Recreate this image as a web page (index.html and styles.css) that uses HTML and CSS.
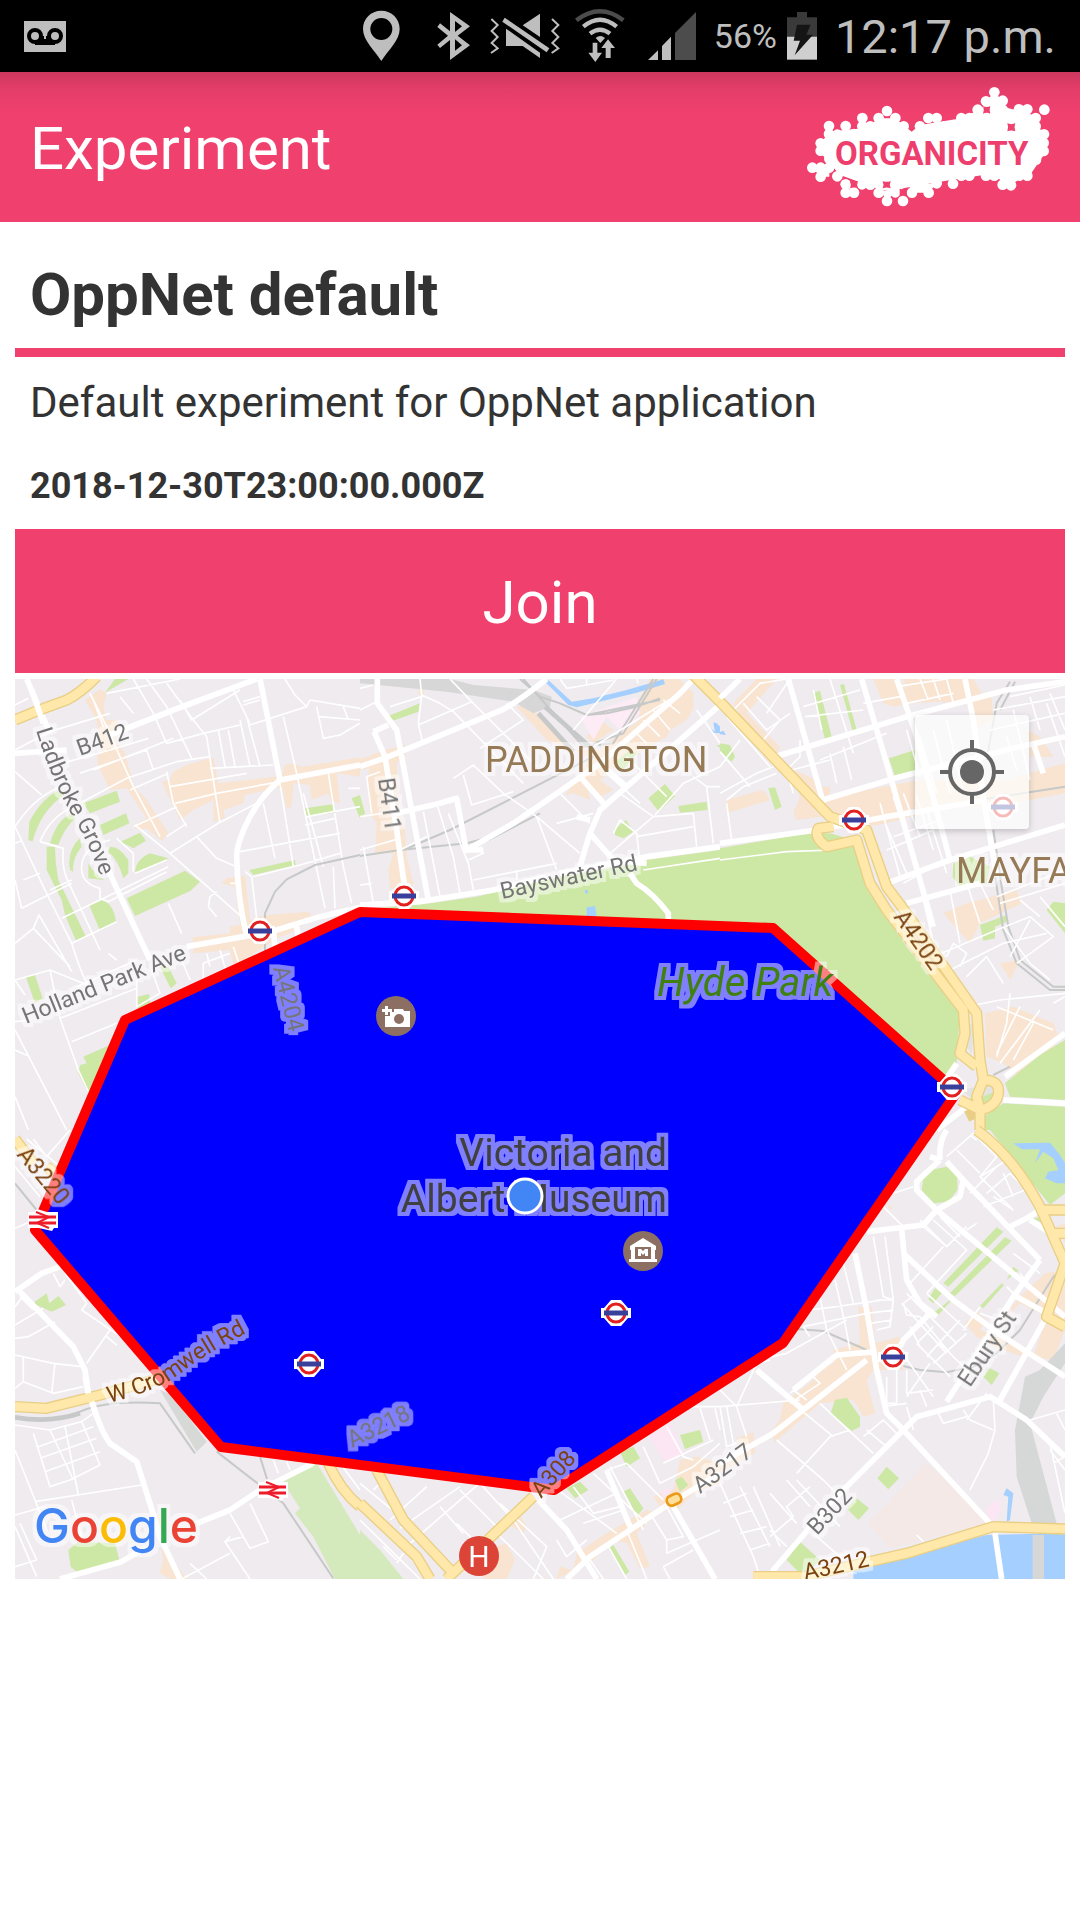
FILE: index.html
```html
<!DOCTYPE html>
<html lang="en">
<head>
<meta charset="utf-8">
<meta name="viewport" content="width=device-width, initial-scale=1">
<title>Experiment</title>
<link rel="stylesheet" href="styles.css">
</head>
<body>
<div class="status">
  <svg class="voicemail" viewBox="0 0 42 31" width="42" height="31" aria-label="Voicemail"><path fill="#bebebe" d="M0 0h42v31H0z"/><g fill="none" stroke="#000" stroke-width="4"><circle cx="11" cy="15" r="6"/><circle cx="31" cy="15" r="6"/><path d="M11 22H31M18 15V20H24V15"/></g></svg>
  <div class="status-right">
    <svg class="sysicons" viewBox="0 0 1050 216" width="350" height="72" aria-hidden="true">
      <g fill="#bebebe">
        <path fill-rule="evenodd" d="M106 32c-31 0-55 24-55 55 0 35 36 65 55 96 19-31 55-61 55-96 0-31-24-55-55-55zm0 22a33 33 0 1 1 0 66 33 33 0 0 1 0-66z"/>
        <path fill-rule="evenodd" d="M312 36l60 43-37 28 37 29-60 44v-60l-30 24-8-10 32-27-32-26 8-11 30 24zM327 63v33l21-17zM327 118v34l21-16z"/>
        <path d="M480 86l102 72v16l-52-36h-50zM530 76l52-35v70zM476 53l134 92-8 12-133-92z"/>
        <path d="M740 128h14v30h14l-20 28-21-28h13zM779 174v-30h-13l20-26 21 26h-13v30zM763 129l-14-15q14-12 28 0zM906 180l30-29v29zM948 180v-42l27-28v70z"/>
      </g>
      <g fill="none" stroke="#bebebe" stroke-width="6"><path d="M436 57l19 18-18 18 18 18-18 18 18 16-20 14M618 57l19 18-18 18 18 18-18 18 18 16-20 14"/></g>
      <g fill="none" stroke="#bebebe" stroke-width="13"><path d="M712 80q50-42 100 0M732 101q30-24 60 0"/><path stroke="#4c4c4c" d="M691 61q71-54 141 0"/></g>
      <path fill="#4c4c4c" d="M987 180V99l63-63v144z"/>
    </svg>
    <span class="percent">56%</span>
    <svg viewBox="0 0 90 144" width="30" height="48" aria-label="Charging"><path fill="#3a3a3a" d="M0 16h30V0h30v16h30v58H0z"/><path fill="#cfcfcf" d="M0 74h90v69H0z"/><path fill="#151515" d="M30 38h41L58 68h20L23 130l16-44H20z"/></svg>
    <span class="clock">12:17 p.m.</span>
  </div>
</div>
<header class="appbar">
  <h1>Experiment</h1>
  <svg class="logo" viewBox="806 86 244 122" width="244" height="122" role="img" aria-label="Organicity">
    <g transform="translate(780 60) scale(.33333)" fill="#fff">
      <path d="M140 225L170 212 250 205 300 175 345 175 395 215 420 195 545 175 595 150 650 110 670 140 760 165 785 215 795 280 750 345 690 365 610 345 480 365 370 385 350 400 290 385 180 345 140 300 115 270 130 240Z"/>
      <path d="M96 323H148V350H122Z M195 375L222 398 235 375Z M300 390L321 423 345 395Z M385 375L400 398 446 398 470 370Z M655 350L668 374 693 374 740 345Z M643 97L618 124 640 160 670 150 668 122Z"/>
      <g>
        <circle cx="147" cy="198" r="16"/><circle cx="197" cy="198" r="16"/><circle cx="147" cy="222" r="16"/><circle cx="172" cy="224" r="16"/><circle cx="222" cy="222" r="16"/><circle cx="122" cy="250" r="16"/><circle cx="122" cy="272" r="16"/><circle cx="148" cy="296" r="16"/><circle cx="97" cy="323" r="16"/><circle cx="122" cy="323" r="16"/><circle cx="122" cy="350" r="16"/><circle cx="147" cy="323" r="16"/><circle cx="172" cy="349" r="16"/><circle cx="197" cy="373" r="16"/><circle cx="197" cy="398" r="16"/><circle cx="222" cy="398" r="16"/><circle cx="246" cy="373" r="16"/><circle cx="271" cy="374" r="16"/><circle cx="296" cy="398" r="16"/><circle cx="321" cy="423" r="16"/><circle cx="369" cy="423" r="16"/><circle cx="346" cy="397" r="16"/><circle cx="396" cy="398" r="16"/><circle cx="421" cy="373" r="16"/><circle cx="446" cy="398" r="16"/><circle cx="470" cy="370" r="16"/><circle cx="519" cy="371" r="16"/><circle cx="544" cy="347" r="16"/><circle cx="568" cy="347" r="16"/><circle cx="618" cy="347" r="16"/><circle cx="643" cy="347" r="16"/><circle cx="668" cy="374" r="16"/><circle cx="693" cy="376" r="16"/><circle cx="718" cy="347" r="16"/><circle cx="742" cy="347" r="16"/><circle cx="742" cy="323" r="16"/><circle cx="768" cy="299" r="16"/><circle cx="791" cy="273" r="16"/><circle cx="791" cy="249" r="16"/><circle cx="792" cy="223" r="16"/><circle cx="767" cy="199" r="16"/><circle cx="767" cy="174" r="16"/><circle cx="793" cy="149" r="16"/><circle cx="742" cy="148" r="16"/><circle cx="717" cy="148" r="16"/><circle cx="693" cy="174" r="16"/><circle cx="668" cy="149" r="16"/><circle cx="668" cy="122" r="16"/><circle cx="643" cy="97" r="16"/><circle cx="618" cy="124" r="16"/><circle cx="593" cy="149" r="16"/><circle cx="568" cy="174" r="16"/><circle cx="544" cy="174" r="16"/><circle cx="519" cy="199" r="16"/><circle cx="494" cy="199" r="16"/><circle cx="470" cy="174" r="16"/><circle cx="445" cy="174" r="16"/><circle cx="420" cy="199" r="16"/><circle cx="371" cy="199" r="16"/><circle cx="346" cy="174" r="16"/><circle cx="321" cy="153" r="16"/><circle cx="296" cy="174" r="16"/><circle cx="271" cy="199" r="16"/><circle cx="247" cy="199" r="16"/><circle cx="247" cy="174" r="16"/>
      </g>
      <path fill="#f0406e" d="M682 190q12 5 24 0-5 11 0 24-12-5-24 0 5-12 0-24zM609 139q11 4 22 0-4 10 0 22-11-5-22 0 5-11 0-22zM210 363q12 5 24 0-5 11 0 22-12-5-24 0 5-11 0-22zM308 363q12 5 24 0-5 11 0 22-12-5-24 0 5-11 0-22zM359 386q12 5 22 0-3 10 0 20-11-5-22 0z"/>
    </g>
    <text class="logo-text" x="835" y="165">ORGANICITY</text>
  </svg>
</header>
<main>
  <h2>OppNet default</h2>
  <p class="desc">Default experiment for OppNet application</p>
  <p class="date">2018-12-30T23:00:00.000Z</p>
  <button class="join" type="button">Join</button>
  <div class="map">
    <svg class="canvas" viewBox="15 679 1050 900" role="img" aria-label="Map of the experiment area">
      <defs>
        <filter id="halo" filterUnits="userSpaceOnUse" x="15" y="679" width="1050" height="900" color-interpolation-filters="sRGB"><feMorphology in="SourceAlpha" operator="dilate" radius="4" result="wide"/><feFlood flood-color="#fff" flood-opacity=".5"/><feComposite in2="wide" operator="in"/><feMerge><feMergeNode/><feMergeNode in="SourceGraphic"/></feMerge></filter>
        <symbol id="tube" viewBox="-15 -15 30 30"><path fill="#fff" d="M-15-5H-12L-5-13H5L12-5H15V5H12L5 13H-5L-12 5H-15Z"/><circle r="9" fill="#fff" stroke="#e1201f" stroke-width="3"/><path fill="#38409c" d="M-12-2.500h24v5h-24z"/></symbol>
        <symbol id="train" viewBox="-15 -12 30 24"><path fill="#fff" d="M-15-8H-9L-6-11 4-8H15V8H11L9 11-4 8H-15Z"/><path fill="none" stroke="#ee1c2b" stroke-width="3" d="M-14-3H13M-14 3H13"/><path fill="none" stroke="#ee1c2b" stroke-width="2" d="M-7-8L6-3-6 3 6 8"/></symbol>
        <path id="ladbroke" d="M36 730Q52 782 73 817T108 900"/>
        <path id="cromwell" d="M109 1403Q158 1391 182 1372T262 1325"/>
      </defs>
      <path fill="#efebef" d="M15 679h1050v900H15z"/>

      <!-- Notting Hill -->
      <g transform="translate(0 670) scale(.33333)">
        <path class="shop" d="M255 90L300 58 320 70 310 110 320 150 350 150 358 190 345 210 375 250 400 345 440 390 505 490 485 512 440 475 420 480 395 470 440 445 380 355 330 360 292 280 292 255 305 250 290 150ZM485 335L510 330 520 305 560 285 640 262 655 340 845 318 855 285 880 280 905 290 1000 275 1080 262V320L1010 310 1020 400 995 395 985 370 935 390 930 345 880 340 875 410 860 415 845 350 735 375 730 400 670 420 675 445 640 455 640 390 580 420 540 450ZM665 640L680 625 735 618 750 750 800 735 925 725 940 745 870 790 840 800 730 870 700 885 690 840 580 850 578 802 690 790 690 770 720 765 705 650Z"/>
        <path class="park" d="M85 510L88 455Q125 385 175 362L195 372Q120 425 98 514ZM140 600V530H165Q165 580 175 630L258 800 228 812 195 735 185 690ZM150 520Q170 450 215 430L225 445Q190 480 175 525ZM250 400L350 362 360 395 270 430ZM300 465L378 430 388 460 310 495ZM210 600Q200 540 240 505L245 530Q215 565 220 605ZM265 625V580Q280 610 312 630ZM330 530Q360 530 385 570V610L370 625Q355 570 325 545ZM362 515L420 488 438 512 400 535ZM405 610Q405 570 450 550L505 565 480 580ZM380 685L555 602 600 635 572 662 405 738ZM268 706L300 690Q340 695 348 755L300 782ZM78 922L105 915 128 985 105 1000ZM915 415L1002 402 1005 428 920 440ZM748 600L885 570 887 585 760 615ZM1055 385L1080 375V445ZM315 68L345 27H385ZM480 890H505L530 940 512 955ZM413 980L447 972 452 1005 413 1025ZM250 1160L330 1125 268 1275 235 1210 240 1185 260 1180Z"/>
        <path class="minor" d="M45 105L85 85M45 240L150 185 330 130M45 305L125 375M45 470Q110 370 200 345M45 470L130 650 215 820M45 520L65 512M65 715L45 630M65 715L215 640M70 630L120 610M120 515L190 535Q185 590 200 625L300 840M120 515Q150 440 220 410L380 325 530 275 630 260M150 660L215 630M185 745L300 690 505 590M215 820L350 755M215 820Q240 900 262 945M45 820L100 775 117 735 215 905M100 775L210 890M45 930L150 900 180 1045 410 955V930M45 1055L90 1050M180 1045L235 1200 270 1275M215 1115L350 1060M45 1080L200 1380M45 1140L90 1160M45 1280L85 1380M45 930L75 975M150 900L262 945M150 290L330 240 445 205M280 300L520 205M240 310L440 240 460 300M270 70L320 170 400 350 480 500M320 70L540 27M310 170L280 90M360 80L400 130M400 27L460 130 500 220 610 190 720 165M440 27L500 110 575 265M500 40L580 150 620 200 660 460M540 90L575 150 720 60M655 180L675 290M685 180L705 290M720 150L750 290M740 140L780 290M630 295L820 285M730 95L780 80M730 105L780 90M700 60L750 160M750 165L920 110 885 75 855 27M850 140L890 310 975 715M920 110L930 90 1080 115M950 110L970 205 1020 195 1080 160M955 140L1080 150M1030 110L1045 150M500 305L520 400 560 470M510 350L740 310M525 400L650 370 840 335M400 470L530 410M390 360L505 310M500 500L560 460M405 465L510 550 730 745M510 550L655 460 770 400M590 500L650 565 720 595M500 570L405 610M400 605V550L350 505M330 510Q250 530 245 585T300 655M300 655V685L325 695 500 605M720 545L880 515 1020 490M790 400L825 565M735 605L755 620 770 745M760 620L900 585 1020 550M840 340L880 590M910 370L970 590M985 310L1030 590 1055 700M915 465L1005 445M1045 355H1080M920 440L1080 410M1000 590L1005 715M625 710L630 680 650 665M625 710L650 740M690 640H720M505 700L545 790M620 850L630 890M660 840L680 910M700 830L720 890M610 930V880L690 850M545 870L570 930M410 955V1010L480 970 455 900M350 870L325 850M230 950L410 870"/>
        <path class="rail" d="M795 850V730L825 665 860 628 945 585 1080 555M900 765Q960 740 1080 715"/>
        <path class="major" d="M45 250L200 240M330 195L520 120 770 27M780 27L840 330M1080 285L840 330Q780 380 745 450T710 560Q712 680 740 800M80 27L120 120 150 190M320 590L380 720 450 870M560 830L730 800 830 780 960 740 1080 712M890 770L895 800M820 780L825 830"/>
        <path class="edge" d="M45 150L105 125 200 90Q240 70 290 20"/><path class="yellow" d="M45 150L105 125 200 90Q240 70 290 20"/>
        <path class="major" d="M95 60L130 160"/>
      </g>

      <!-- Paddington -->
      <g transform="translate(360 670) scale(.33333)">
        <path class="shop" d="M0 268L75 240 135 225 135 270 110 275 115 420 135 480 140 560 160 640 155 665 90 655 85 600 100 550 45 550 50 460 30 430 20 330 30 295 0 300ZM172 27H187L192 75 178 77ZM470 110L500 100 600 200 640 240 720 240 780 190 840 150 830 100 870 27H960L1000 70 1000 115 980 150 930 180 920 200 850 240 750 300 720 330 760 360 720 380 680 340 690 390 640 370 615 375 650 330 690 260 560 210ZM680 200L720 150 760 180 700 220Z"/>
        <path class="park" d="M80 140L180 100 175 125 90 155ZM0 375L15 430 0 445ZM210 700L350 680 600 620 830 580 860 570 1080 540V755L0 720ZM865 385L915 342 945 378 897 425ZM955 408L1040 395 1043 420 960 428ZM763 478L798 450 820 485 790 505 765 495ZM760 280L810 240 830 250 790 300ZM1070 225H1080V235Z"/>
        <path fill="#fdebf5" d="M660 140L830 80 840 130 790 190 740 140 700 210Z"/>
        <path class="water" d="M555 35L565 30 635 95 700 85 800 60 870 40 910 28 915 42 830 68 650 112 625 105ZM680 712L705 708 710 740H680ZM1050 175L1065 185 1060 158H1068L1080 170V190L1055 188ZM675 660H684V670H675Z"/>
        <path fill="#d7d7d7" d="M0 27H270L340 45 520 60 575 80 570 110 520 130 460 95 260 65 0 40Z"/>
        <path class="rail" d="M0 558L120 540 320 520 395 500M130 540L270 480 700 260M385 510L540 430M480 27L540 80 600 100 680 135 900 90M680 135L740 130 830 110 900 85M490 27L670 230 760 220 880 27M700 220L790 190 890 27"/>
        <path class="rail dense" d="M535 130L640 245M555 110L700 240"/>
        <path class="minor" d="M0 120L50 95M0 55L40 45M180 27L185 75 240 100 280 125 490 340M185 75L175 160 187 215M175 165L335 95M270 27L340 100 370 130 530 290M440 100L490 150 360 235M185 80L90 110M0 440L240 405M20 320L60 305M20 320L35 430M0 540L120 505M10 530L40 700M0 645L35 640M190 425L240 680M230 400L280 560 300 670M240 405L265 395M265 430L325 580 340 660M340 630L590 580M325 570L370 550 360 530M280 325L340 285 430 370 530 440 590 600M310 315L335 405 460 365M530 440L660 550M470 600V630M590 460L700 430M600 370L690 460M780 370L880 440 750 550M760 490L780 450 830 490 840 580M830 500L1000 470M880 440L1000 430 1010 530M885 435L970 340 1080 290M1000 320L1040 350H1080M1040 350L1060 520M740 310L840 400M800 260L920 380M700 230L960 70M820 180L860 220M850 150L900 200M880 120L930 180M910 90L960 130M600 27L620 55 680 45 760 30M680 27V45M830 27L835 40M1010 120L1080 220M850 600L1080 565M640 180L770 27M120 540L200 500M0 700L210 685"/>
        <path class="major" d="M0 290L80 262 430 118Q480 90 560 27M52 27V100L110 180 155 420 205 690M40 185L85 165M42 185L75 260 110 480 135 660M110 430L240 400 290 385 320 550M320 540L460 460 620 350 720 280 960 70 1000 27M320 540L370 540M0 705L180 695 400 660 560 620M600 610L860 560 1080 530M660 590Q680 520 690 490L720 420 1080 105M690 450L650 440M690 490L760 570 860 580M660 320L740 410M740 300L800 350M810 610L830 640Q880 670 925 730V748"/>
        <path class="edge" d="M1000 15L1080 95"/><path class="yellow" d="M1000 15L1080 95"/>
      </g>

      <!-- Mayfair and Marble Arch -->
      <g transform="translate(720 670) scale(.33333)">
        <path class="shop" d="M40 100L110 27H170L80 130 120 170 180 230 165 270 110 220ZM460 27H540L580 100 520 110 490 100ZM550 27H760L790 80 815 80 820 150 760 180 740 100 650 95 570 100ZM220 430L240 380 200 290 290 330 300 350 330 350 330 380 600 330 860 330 1035 280V370L880 400 640 420 500 460 440 470 300 440 230 450ZM20 390L130 360 150 390 20 430ZM670 730L740 700 890 660 905 700 780 760 750 820ZM795 1030L880 1010 1000 1060 1020 1110 900 1225 850 1180 800 1160ZM840 880L900 870 870 930ZM920 180L960 200 1000 260 930 260Z"/>
        <path class="park" d="M0 535L260 490 330 490 400 510 470 700 560 830 720 1020 710 1180 670 1230 160 770 0 760ZM278 70L300 62 335 200 315 207ZM360 45L372 42 410 180 398 183ZM507 265L585 240V305L525 318ZM0 220L30 225 45 260 35 275 0 245ZM145 355L165 352 185 410 165 420ZM700 580L750 560 810 590 800 640 720 650 698 620ZM780 765L860 735 860 755 825 770 825 805 790 812ZM980 720L1000 695 1035 700V790ZM855 1240L960 1155 1035 1110V1290L870 1280ZM790 1340L850 1300 1035 1310V1380H790ZM740 1290L820 1260 820 1300 770 1315Z"/>
        <path class="water" d="M0 186L10 182 18 195 0 193Z"/><path fill="#e3e3e3" d="M725 1260L820 1240 840 1260 760 1290ZM745 1060L765 1070 755 1150 740 1130Z"/>
        <path class="rail" d="M870 35L830 100 800 270M885 35L840 120M580 420L1035 350M805 480L830 650 850 780 890 880 990 960 1035 960M820 480L845 650 865 770 900 870 1000 950H1035M820 1215L870 1190"/>
        <path class="minor" d="M0 370L110 310 160 290M0 245L90 350M0 290L60 210M20 390L70 350 170 310M20 400L35 510M20 140L150 290M40 120L120 40 200 27M70 100L140 180 210 130M110 80L180 150 130 210M210 27L140 130M240 210V260L200 300 220 370M215 300L330 270M330 250L350 340M370 230L395 330M250 110L420 60M255 140L430 120M330 27L400 250M280 60L305 180M300 270L500 190M430 100L540 80M530 50L680 27M560 100L700 70M600 27L625 90M640 27L660 90M680 27L700 100M560 180L600 320M600 200L650 370M640 180L690 370M680 150L730 370M550 370L600 500M590 380L640 540M620 420L680 610M520 500L660 450M480 400L540 620M520 380L600 620M500 470L560 610M500 540L640 480M550 640L620 600M610 690L650 860M690 660L720 820M740 640L780 760M780 640L820 720M830 680L1035 600M840 700L1035 640M870 80L1035 45M820 120L1035 80M810 180L1035 130M860 200L890 300M880 120L930 330M930 80L960 180M980 100L1035 260M990 70L1035 180M640 860L830 780 930 740 1000 800 890 880M680 860L700 820 740 850 720 890M690 900L850 820 980 790M850 770L930 880 990 930M870 860L930 750M740 920L800 860 850 940M830 1010L1000 1080M870 970L860 1060 830 1160M900 1010L830 1150M960 1020L840 1180M1000 1000L1035 980M940 1060L880 1170M960 680L1035 770M900 690L960 740M740 1010L840 990 1035 970M0 570L200 545 340 540"/>
        <path class="major" d="M0 85L60 27M205 27L240 150 310 400M425 27L500 280 640 770M530 27L590 200 690 570M735 27L760 150 790 380 830 620M165 260L330 210 560 140 860 60 1035 35M290 395L540 320 900 230 1035 200M0 520L290 480 500 440 800 390M500 640L690 570 1035 465M560 700L780 640M940 220L970 310M855 1220L1035 1090M850 1290L1035 1300M650 1380L740 1310M670 1240L710 1180"/>
        <path class="edge" d="M0 95L330 440 440 480 500 650 560 730 770 1030 780 1170 790 1230 770 1280 780 1320 780 1380M340 470L295 475Q280 500 320 530L410 510 450 640 500 720 730 1020 735 1090 720 1150 770 1190M790 1230Q840 1230 835 1270T780 1320L720 1290M780 1320L740 1340"/>
        <path class="yellow" d="M0 95L330 440 440 480 500 650 560 730 770 1030 780 1170 790 1230 770 1280 780 1320 780 1380M340 470L295 475Q280 500 320 530L410 510 450 640 500 720 730 1020 735 1090 720 1150 770 1190M790 1230Q840 1230 835 1270T780 1320L720 1290"/>
      </g>

      <!-- West Kensington -->
      <g transform="translate(0 1130) scale(.33333)">
        <path class="shop" d="M470 1150L500 1170 500 1270 560 1347H510L480 1330 490 1290Z"/>
        <path class="park" d="M98 520L140 490 148 520 175 498 198 525 155 545ZM205 1260L235 1235 345 1240 358 1290 235 1330 212 1310Z"/>
        <path fill="#d4eabc" d="M845 1050L950 1000 1080 1215V1347H1005L940 1220 885 1150 900 1135Z"/>
        <path fill="#d7d9d7" d="M480 780L515 795 620 935 590 965Z"/>
        <path class="rail" d="M45 160L110 240M45 860Q160 880 240 845T480 820L585 970M650 965L850 1120 1000 1345M780 980L805 1060"/>
        <path class="rail dense" d="M45 862Q150 880 240 850"/>
        <path class="minor" d="M100 27L140 80 210 0M45 110L120 200M45 295L90 275M80 27L180 110M45 585L130 535M75 490L45 530M45 625L85 620 165 575M60 500L100 540M160 430L180 470 195 450M195 430L260 520 245 540 370 625M330 600L260 700M320 620L350 645M45 675L160 700 245 710M70 680V755L45 775M70 755L160 790 250 770M165 700L155 790M45 885L150 900M150 900L245 875 280 850M100 910L150 1070 210 1050M150 900L220 1050M195 890L235 1095M115 950L280 890M120 985L290 925M135 1025L300 965M245 875L300 1005 210 1050M45 960L105 1110 140 1200M105 1115L425 1065M45 1155L135 1130M215 1110L250 1240M45 1190L110 1340M45 1310L110 1290M60 1180L110 1290M690 1150L750 1255 805 1235 750 1120M730 1220L675 1235 750 1347M675 1235L690 1220M545 1347L690 1270M570 1300L620 1347M820 990L835 1030M860 995L870 1020M1020 1000L1080 1080"/>
        <path class="major" d="M45 485L125 430 180 410M60 485L220 650 255 720 265 790M275 810Q300 900 330 940L410 995 450 1120 480 1220 540 1347M590 1180L690 1140 780 1080 940 1000M180 1347L365 1295 440 1250"/>
        <path class="edge" d="M45 830L140 835 300 795 480 745M45 27L100 100M140 110L165 130M985 1000Q1020 1080 1080 1130"/>
        <path class="yellow" d="M45 830L140 835 300 795 480 745M45 27L100 100M140 110L165 130M985 1000Q1020 1080 1080 1130"/>
        <path class="major" d="M255 740L265 790M275 815L290 860"/>
      </g>

      <!-- South Kensington -->
      <g transform="translate(360 1130) scale(.33333)">
        <path class="shop" d="M470 1140L500 1190 490 1210 440 1180ZM370 1260L440 1240 465 1290 440 1347H370ZM590 1347L600 1310 640 1320 650 1270 740 1210 860 1140 890 1150 830 1210 870 1310 840 1315 800 1240 760 1230 700 1290ZM960 990L1010 980 1080 1000V1060L1000 1090 950 1140 900 1130 880 1100 940 1080Z"/>
        <path class="park" d="M780 965L820 950 840 985 800 1010ZM620 1075L660 1055 685 1080 645 1105ZM790 1085L810 1075 850 1135 830 1160ZM960 915L1020 900 1030 935 975 958ZM745 1255L760 1245 808 1325 795 1335ZM945 1050L965 1040 985 1065 960 1085Z"/><path fill="#d4eabc" d="M0 1200L60 1260 130 1347H0Z"/>
        <path fill="#fce6f4" d="M865 920L930 880 970 970 920 1000ZM905 1080L930 1075V1090L905 1110Z"/>
        <path class="minor" d="M0 1170L180 1347M0 1060L110 1150 200 1240M70 1050L40 1080M90 1170L200 1070M110 1290L70 1250M120 1195L300 1070M110 1300L130 1270M150 1240L370 1050M290 1180L350 1240M240 1130L310 1210M360 1060L460 1170 580 1347M300 1080L430 1210M400 1200L550 1347M420 1120L560 1250 520 1347M580 1070L770 1210M640 1070L700 1150 780 1130M600 1170L770 1090M670 1180L790 1140M750 1010L850 1200M700 1030L860 1180M800 1000L910 1110M740 1020L800 1000M850 950L900 1060 1000 1010 1080 940M910 1000L1060 930M920 890L970 980 1000 990M1020 835L1050 930M1080 830H970L950 860M1065 835L1080 900M800 1200L860 1347M870 1150L920 1230 970 1220 920 1130M920 1230V1270L1080 1200M910 1310L1000 1260M910 1310L930 1347M740 1240L800 1347M690 1290L730 1347M590 1230L620 1280 680 1230"/>
        <path class="major" d="M535 1110L620 1200 710 1347M620 1347L690 1280 930 1120 1080 1030M740 1020L810 1190M940 1130L1065 1347"/>
        <path class="edge" d="M0 1120L170 1280 210 1347M50 1020L130 1170 280 1330M520 1100L260 1347"/><path class="yellow" d="M0 1120L170 1280 210 1347M50 1020L130 1170 280 1330M520 1100L260 1347"/>
        <rect x="920" y="1094" width="44" height="30" rx="14" fill="#ffdf9a" stroke="#ea9a16" stroke-width="8" transform="rotate(-25 942 1109)"/>
      </g>

      <!-- Belgravia and Chelsea -->
      <g transform="translate(720 1130) scale(.33333)">
        <path class="shop" d="M415 530H455L465 640 540 620 550 720 460 720 440 750 465 850 430 860 400 810 300 820 165 935 150 910 180 870 190 820 280 750 300 720 340 700 340 660 420 640ZM735 580L770 545 800 570 780 600 900 650 910 680 820 650 770 620ZM820 600L900 500 975 430 1035 420V600L1000 690 940 680 980 560 900 520ZM50 925L100 905 105 970 0 1030V1010L60 960ZM500 220L520 235 510 238ZM1010 290L1035 280V340Z"/>
        <path fill="#f4e9e6" d="M445 1180L620 1000 740 1100 805 1180 510 1255Z"/><path fill="#fce6f4" d="M795 1140L835 1105 845 1140 820 1180Z"/>
        <path class="park" d="M630 120L680 110 712 140V180L685 215 640 220 605 180 610 145ZM830 292L850 305 685 470 670 460ZM855 322L875 332 705 498 690 490ZM625 508L645 475 665 490 640 520ZM645 545L690 510 690 515 655 555ZM880 410L895 422 860 450ZM845 460L852 465 790 535 780 528ZM810 0H1035V190L990 225ZM332 850L345 810 380 803 420 860 420 890 395 903ZM472 1045L500 1010 537 1045 505 1078ZM380 1135L410 1105 447 1135 415 1170ZM200 1290L240 1235 300 1290 250 1340ZM790 740L810 715 838 730 815 765ZM940 265L960 262 985 290Z"/>
        <path class="water" d="M880 40L990 38 1020 75 1035 100V160L1010 160 975 145 985 125 1015 120 1000 85 970 65 945 100 960 58 905 58ZM860 1075L880 1090 870 1170 860 1175 865 1100 850 1095ZM400 1347V1315L560 1270 800 1215 1035 1210V1347Z"/>
        <path fill="#d6d8d7" d="M915 740L960 720 1035 640V700L970 800 930 880 1010 1180H935L890 1040 885 900ZM938 1215H972V1347H938Z"/>
        <path class="rail" d="M230 597L310 603 440 660M550 708L600 720 680 727 760 710 830 670 900 600 1000 440 1035 410"/>
        <path class="minor" d="M680 80L760 10 830 80 780 140 880 240M710 60L780 130M750 15L770 30M780 140L870 85M790 230L915 180M800 190L870 130 920 180M850 130L880 200M820 200L880 240M750 190L830 110M520 190L580 170M480 220L550 290M610 290L680 350 740 290M670 350L570 460M640 270L740 360 620 490M550 520L590 490M545 520L680 670M560 490L710 640M550 520L560 555 600 560 690 670M570 590L600 650M740 300L770 280M600 270L680 350M660 260L720 320M620 490L740 600M590 640L640 590M620 680L720 570M640 700L740 610M460 320L490 500 520 510 510 590 470 600M495 320L520 510M470 510L520 510M440 550L520 540M450 580L515 570M370 400L400 520M345 450L375 580 390 660M300 500L320 600 380 720M260 540L310 535 490 510M250 590L440 550M250 590L270 620M110 690L200 670 380 570M110 700L150 690M0 830L240 810M0 780L50 830 110 700M20 830L40 940M50 830L80 920M0 830L20 950 50 940M210 790L330 690M210 820L300 760 270 730M220 780L260 810M300 820L460 970M230 830L340 920M170 930L310 1050 350 1090M230 1030L330 920 390 900M440 900L500 950M430 920L490 870 530 910M500 740V820H530V700M480 740L490 830 560 820M540 660L640 800M560 720V790L640 780M560 830L580 900M590 640L690 740M660 640L740 720M560 800L630 700M600 780L620 830M650 840L670 880 740 860M730 840L750 870 820 900M740 870L800 790M820 810L825 900 805 970 750 1080M930 870L1035 840M1010 850L1035 900M990 940L1035 1150M990 960L1035 1020M1000 1000L1035 980M860 580L780 550M780 530L730 600M840 560L880 510M900 510L860 470M940 480L900 430M880 370L960 430M0 1060L100 1280 120 1340M10 1120L80 1090M30 1160L100 1140M60 1210L140 1190M90 1260L150 1240M60 1070L150 1250M100 1070L180 1250M150 1090L230 1180M150 1220L220 1160 200 1130 270 1070M200 1050L270 1130M230 1050L360 1190M150 1200L200 1250M280 1210L370 1290M300 1290L390 1270M590 1215L610 1235"/>
        <path class="major" d="M680 0Q655 40 660 90M660 90L590 155 590 180 650 240 720 200 730 150 680 95M730 150L960 390M650 240L1035 560M960 390L880 500 680 815M890 500L980 550M440 305L610 285 650 240M405 370L440 540 470 720 500 850 550 900 810 1180M545 300L560 450 600 520 650 560M550 370L700 510 850 620 1035 740M640 540L550 630 540 650M470 665L350 675 220 780M440 690L160 910 0 1000M110 720L250 840M540 910L340 1110 160 1320V1340M540 910L590 860 810 800 920 870 1035 980M980 560L840 810M825 1210L845 1347M870 290L920 265 960 240M930 270L1000 315M630 80L660 90"/>
        <path class="edge" d="M770 0Q880 80 960 230L1035 400 980 560 1035 590M960 240H1035M1000 310H1035M100 1340L250 1340 560 1270 820 1190 1035 1197"/><path class="yellow" d="M770 0Q880 80 960 230L1035 400 980 560 1035 590M960 240H1035M1000 310H1035M100 1340L250 1340 560 1270 820 1190 1035 1197"/>
      </g>

      <path class="area" d="M125 1020L360 912 773 928 957 1092 783 1343 554 1490 221 1447 35 1230Z"/>

      <use href="#tube" x="245" y="916" width="30" height="30"/><use href="#tube" x="389" y="881" width="30" height="30"/><use href="#tube" x="839" y="805" width="30" height="30"/><use href="#tube" x="937" y="1072" width="30" height="30"/><use href="#tube" x="601" y="1298" width="30" height="30"/><use href="#tube" x="294" y="1349" width="30" height="30"/><use href="#tube" x="878" y="1342" width="30" height="30"/><use href="#tube" x="988" y="792" width="30" height="30"/>
      <use href="#train" x="28" y="1208" width="30" height="24"/><use href="#train" x="258" y="1478" width="30" height="24"/>

      <g filter="url(#halo)">
        <g class="place">
          <text x="485" y="772">PADDINGTON</text>
          <text x="956" y="883">MAYFAIR</text>
        </g>
        <g class="road">
          <text transform="translate(80 756) rotate(-20)">B412</text>
          <text transform="translate(378 779) rotate(82)">B411</text>
          <text><textPath href="#ladbroke">Ladbroke Grove</textPath></text>
          <text transform="translate(26 1024) rotate(-22)">Holland Park Ave</text>
          <text transform="translate(502 899) rotate(-12)">Bayswater Rd</text>
          <text transform="translate(273 968) rotate(76)">A4204</text>
          <text transform="translate(352 1448) rotate(-26)">A3218</text>
          <text transform="translate(700 1494) rotate(-36)">A3217</text>
          <text transform="translate(817 1536) rotate(-47)">B302</text>
          <text transform="translate(970 1388) rotate(-56)">Ebury St</text>
        </g>
        <g class="road main">
          <text transform="translate(893 917) rotate(55)">A4202</text>
          <text transform="translate(16 1155) rotate(50)">A3220</text>
          <text><textPath href="#cromwell">W Cromwell Rd</textPath></text>
          <text transform="translate(541 1499) rotate(-48)">A308</text>
          <text transform="translate(805 1580) rotate(-12)">A3212</text>
        </g>
        <text class="hyde" x="657" y="996">Hyde Park</text>
        <g class="poi"><text x="667" y="1166">Victoria and</text><text x="667" y="1212">Albert Museum</text></g>
        <text class="google" x="34" y="1543"><tspan fill="#4285f4">G</tspan><tspan fill="#ea4335">o</tspan><tspan fill="#fbbc05">o</tspan><tspan fill="#4285f4">g</tspan><tspan fill="#34a853">l</tspan><tspan fill="#ea4335">e</tspan></text>
      </g>

      <circle cx="525" cy="1196" r="17" fill="#4285f4" stroke="#fff" stroke-width="3"/>
      <circle cx="396" cy="1016" r="20" fill="#8d6e63"/>
      <path fill="#fff" fill-rule="evenodd" d="M385 1016h5v-4h4v-3h9l1 2h6v16h-25zm14-2a5 5 0 1 0 0 10 5 5 0 0 0 0-10zM382 1009h3v-3h3v3h4v3h-4v3h-3v-3h-3z"/>
      <circle cx="643" cy="1251" r="20" fill="#8d6e63"/>
      <path fill="#fff" fill-rule="evenodd" d="M643 1238l13 8v4h-1v9h2v3h-28v-3h2v-9h-1v-4zm-8 9v12h16v-12zM638 1256v-7h3l2 2 2-2h3v7h-3v-3l-2 2-2-2v3z"/>
      <circle cx="479" cy="1556" r="20" fill="#db4437"/>
      <text class="hospital" x="479" y="1567">H</text>
    </svg>
    <button class="locate" type="button" aria-label="My location">
      <svg viewBox="-32 -32 64 64" width="64" height="64"><circle r="12" fill="#666"/><circle r="22" fill="none" stroke="#666" stroke-width="4"/><path stroke="#666" stroke-width="4" d="M0-32v9M0 32v-9M-32 0h9M32 0h-9"/></svg>
    </button>
  </div>
</main>
</body>
</html>
```
FILE: styles.css
```css
* { box-sizing: border-box; }
body { margin: 0; background: #fff; color: #333; font-family: Roboto, "Liberation Sans", sans-serif; }
h1, h2, p { margin: 0; }
svg { display: block; }

.status { display: flex; align-items: center; justify-content: space-between; height: 72px; padding: 0 24px; background: #000; color: #bebebe; }
.status-right { display: flex; align-items: center; gap: 10px; }
.percent { margin-left: 8px; font-size: 34px; }
.clock { margin-left: 8px; font-size: 47px; line-height: 70px; padding-top: 2px; }

.appbar { display: flex; align-items: center; justify-content: space-between; height: 150px; padding: 0 30px; background: linear-gradient(#cb375e, #e33d69 16px, #f0406e 42px); color: #fff; }
.appbar h1 { padding-top: 4px; font-size: 60px; font-weight: 400; line-height: 70px; }
.logo-text { fill: #ee3e6d; font-size: 33px; font-weight: 700; }

main { padding: 0 15px; }
h2 { padding: 38px 15px 18px; border-bottom: 9px solid #f0406e; font-size: 60px; font-weight: 700; line-height: 70px; }
.desc { padding: 21px 15px 19px; font-size: 42px; line-height: 50px; }
.date { padding: 14px 15px 18px; font-size: 36px; font-weight: 700; line-height: 50px; }
.join { display: block; width: 100%; height: 144px; margin-bottom: 6px; padding: 4px 0 0; border: 0; background: #f0406e; color: #fff; font: 400 60px/70px Roboto, "Liberation Sans", sans-serif; }

.map { position: relative; overflow: hidden; }
.canvas { width: 100%; height: auto; }
.locate { position: absolute; top: 36px; right: 36px; display: grid; place-items: center; width: 114px; height: 114px; padding: 0; border: 0; border-radius: 4px; background: rgba(255, 255, 255, .7); box-shadow: 0 2px 6px rgba(0, 0, 0, .2); }

.park { fill: #cde7a5; }
.shop { fill: #f8e4d1; }
.water { fill: #a4cfff; }
.minor, .major, .rail, .edge, .yellow { fill: none; stroke-linejoin: round; }
.minor { stroke: #fff; stroke-width: 5px; }
.major { stroke: #fff; stroke-width: 17px; }
.rail { stroke: #c7c9c8; stroke-width: 6px; }
.dense { stroke-width: 14px; }
.edge { stroke: #e9cf85; stroke-width: 34px; }
.yellow { stroke: #ffe8a9; stroke-width: 26px; }
.area { fill: #00f; stroke: #f00; stroke-width: 10px; stroke-linejoin: round; }

.place text { fill: #957a55; font-size: 36px; }
.road text { fill: #757575; font-size: 23px; }
.main text { fill: #7a4210; }
.hyde { fill: #3f8010; font-size: 40px; font-style: italic; }
.poi text { fill: #404040; font-size: 39px; text-anchor: end; }
.hospital { fill: #fff; font-size: 30px; text-anchor: middle; }
.google { font: 500 48px Inter, Roboto, sans-serif; }
```
